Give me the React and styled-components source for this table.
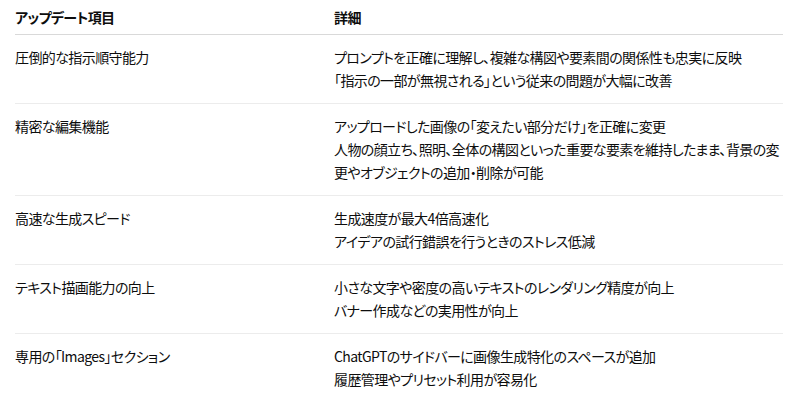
import styled, { createGlobalStyle } from 'styled-components';

const GlobalStyle = createGlobalStyle`
  body {
    margin: 0;
    background: #ffffff;
    font-family: "Noto Sans CJK JP", "Noto Sans", sans-serif;
    font-feature-settings: "palt";
    color: #0d0d0d;
  }
`;

const rows = [
  {
    item: '圧倒的な指示順守能力',
    details: [
      'プロンプトを正確に理解し、複雑な構図や要素間の関係性も忠実に反映',
      '「指示の一部が無視される」という従来の問題が大幅に改善',
    ],
  },
  {
    item: '精密な編集機能',
    details: [
      'アップロードした画像の「変えたい部分だけ」を正確に変更',
      '人物の顔立ち、照明、全体の構図といった重要な要素を維持したまま、背景の変更やオブジェクトの追加・削除が可能',
    ],
  },
  {
    item: '高速な生成スピード',
    details: ['生成速度が最大4倍高速化', 'アイデアの試行錯誤を行うときのストレス低減'],
  },
  {
    item: 'テキスト描画能力の向上',
    details: ['小さな文字や密度の高いテキストのレンダリング精度が向上', 'バナー作成などの実用性が向上'],
  },
  {
    item: '専用の「Images」セクション',
    details: ['ChatGPTのサイドバーに画像生成特化のスペースが追加', '履歴管理やプリセット利用が容易化'],
  },
];

export default function App() {
  return (
    <>
      <GlobalStyle />
      <Table>
        <HeadRow>
          <HeadCell>アップデート項目</HeadCell>
          <HeadCell>詳細</HeadCell>
        </HeadRow>
        {rows.map((row, i) => (
          <Row key={row.item} last={i === rows.length - 1}>
            <Cell>{row.item}</Cell>
            <Cell>
              {row.details.map(line => (
                <Line key={line}>{line}</Line>
              ))}
            </Cell>
          </Row>
        ))}
      </Table>
    </>
  );
}

const Table = styled.div`
  margin: 0 20px 0 15px;
  font-size: 14px;
  line-height: 23px;
  letter-spacing: -0.6px;
`;

const HeadRow = styled.div`
  display: grid;
  grid-template-columns: 319px 1fr;
  padding: 6px 0 5px;
  border-bottom: 1px solid #d9d9d9;
`;

const HeadCell = styled.div`
  font-weight: 700;
`;

const Row = styled.div`
  display: grid;
  grid-template-columns: 319px 1fr;
  padding: 11px 0;
  border-bottom: ${({ last }) => (last ? 'none' : '1px solid #ececec')};
`;

const Cell = styled.div`
  display: flex;
  flex-direction: column;
`;

const Line = styled.div``;
